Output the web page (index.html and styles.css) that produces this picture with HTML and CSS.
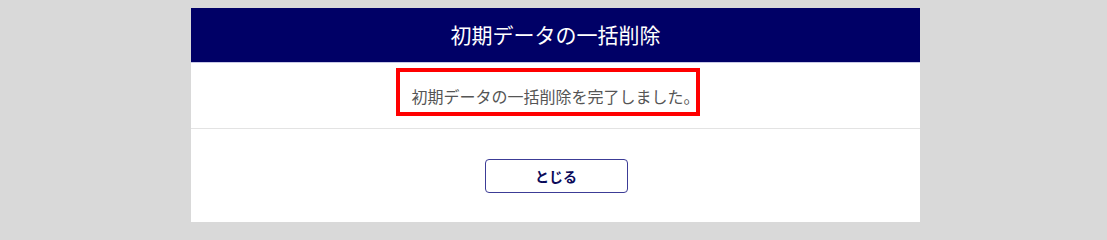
FILE: index.html
```html
<!DOCTYPE html>
<html lang="ja">
<head>
<meta charset="utf-8">
<title>初期データの一括削除</title>
<link rel="stylesheet" href="styles.css">
</head>
<body>
<div class="dialog">
  <div class="dialog-header">初期データの一括削除</div>
  <div class="dialog-body">
    <p class="message">初期データの一括削除を完了しました。</p>
    <span class="highlight"></span>
  </div>
  <div class="dialog-footer">
    <button class="close-btn" type="button">とじる</button>
  </div>
</div>
</body>
</html>
```

FILE: styles.css
```css
html, body {
  margin: 0;
  padding: 0;
}
body {
  background: #d9d9d9;
  padding-top: 8px;
  font-family: "Noto Sans CJK JP", "Noto Sans", sans-serif;
}
.dialog {
  width: 729px;
  margin-left: 191px;
  background: #ffffff;
}
.dialog-header {
  height: 55px;
  box-sizing: border-box;
  background: #000066;
  border-bottom: 1px solid #c8c8e6;
  color: #ffffff;
  font-size: 21px;
  display: flex;
  align-items: center;
  justify-content: center;
  padding-bottom: 3px;
}
.dialog-body {
  position: relative;
  height: 65px;
  display: flex;
  align-items: center;
  justify-content: center;
  border-bottom: 1px solid #e3e3e3;
}
.message {
  margin: 0;
  font-size: 16px;
  color: #555555;
  white-space: nowrap;
}
.highlight {
  position: absolute;
  left: 205px;
  top: 5px;
  width: 296px;
  height: 40px;
  border: 4px solid #ff0000;
}
.dialog-footer {
  height: 93px;
  display: flex;
  justify-content: center;
  align-items: flex-start;
  padding-top: 30px;
  box-sizing: border-box;
}
.close-btn {
  width: 143px;
  height: 34px;
  margin-left: 1px;
  background: #ffffff;
  border: 1px solid #3c3c96;
  border-radius: 4px;
  color: #0a0a5a;
  font-family: "Noto Sans CJK JP", sans-serif;
  font-size: 14px;
  font-weight: bold;
  padding: 0;
}
```
